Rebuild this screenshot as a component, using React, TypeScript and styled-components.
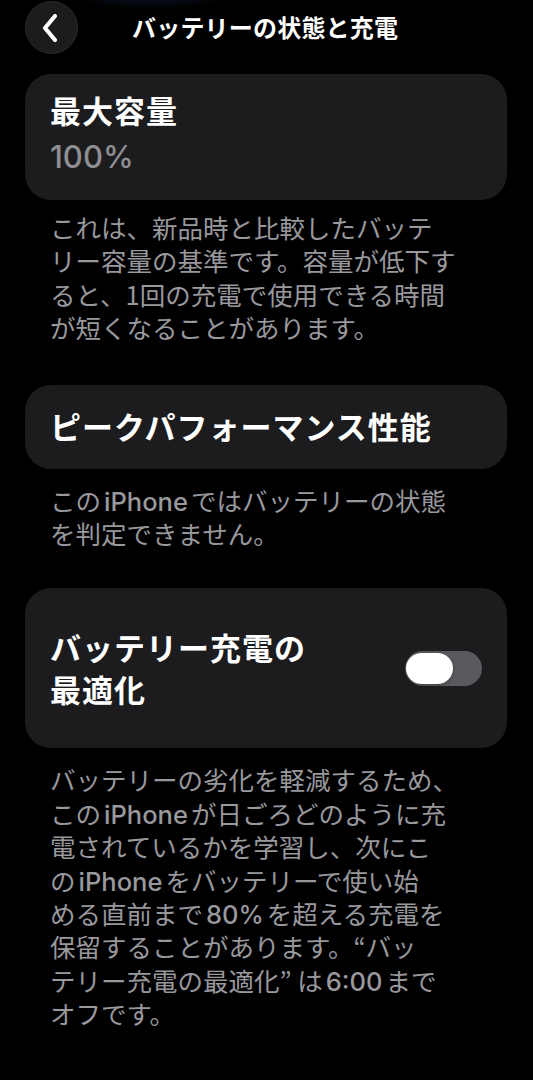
import React from "react";
import styled, { createGlobalStyle } from "styled-components";

const Global = createGlobalStyle`
  html, body { margin: 0; padding: 0; background: #000; }
  body {
    font-family: "Noto Sans CJK JP", "Noto Sans", sans-serif;
    color: #fff;
    -webkit-font-smoothing: antialiased;
  }
`;

const Page = styled.div`
  width: 533px;
  min-height: 1080px;
  background: #000;
  position: relative;
  overflow: hidden;
`;

const Glow = styled.div`
  position: absolute;
  left: 60px;
  top: -30px;
  width: 180px;
  height: 40px;
  border-radius: 50%;
  background: radial-gradient(ellipse at center, rgba(30, 60, 110, 0.45), rgba(0, 0, 0, 0) 70%);
  pointer-events: none;
`;

const Header = styled.header`
  display: flex;
  align-items: center;
  height: 55px;
  padding: 0 0 0 25px;
  gap: 54px;
  position: relative;
`;

const BackButton = styled.button`
  width: 53px;
  height: 53px;
  border-radius: 50%;
  border: 1px solid #2a2a2a;
  background: #1c1c1d;
  display: flex;
  align-items: center;
  justify-content: center;
  padding: 0 3px 0 0;
  margin: 0;
`;

const Title = styled.h1`
  margin: 0 0 2px;
  font-size: 24px;
  font-weight: 700;
  letter-spacing: 0.2px;
  color: #fff;
`;

const Content = styled.main`
  display: flex;
  flex-direction: column;
  padding: 19px 26px 0 25px;
`;

const Card = styled.section<{ $minH: number; $pt?: number }>`
  background: #1c1c1e;
  border-radius: 26px;
  min-height: ${(p) => p.$minH}px;
  box-sizing: border-box;
  padding: ${(p) => p.$pt ?? 0}px 24px 0 25px;
  display: flex;
  flex-direction: column;
`;

const CardTitle = styled.div`
  font-size: 31px;
  font-weight: 700;
  line-height: 42px;
  color: #fff;
  letter-spacing: 1px;
`;

const Value = styled.div`
  margin-top: 6px;
  font-size: 31px;
  font-weight: 500;
  line-height: 40px;
  color: #8e8e93;
  font-family: "Inter", "Noto Sans", sans-serif;
`;

const Row = styled.div`
  display: flex;
  align-items: center;
  justify-content: space-between;
  min-height: 160px;
`;

const Note = styled.p<{ $mt: number; $mb: number }>`
  margin: ${(p) => p.$mt}px 0 ${(p) => p.$mb}px 25px;
  font-size: 25.5px;
  line-height: 33.4px;
  color: #98989d;
  letter-spacing: 0;
  white-space: nowrap;
`;

const Latin = styled.span`
  font-family: "Inter", "Noto Sans", sans-serif;
  font-weight: 500;
  line-height: 1;
  margin: 0 3px;
`;

const Track = styled.div`
  width: 77px;
  height: 35px;
  border-radius: 18px;
  background: #59595e;
  display: flex;
  align-items: center;
  padding: 0 1px;
  box-sizing: border-box;
  margin-right: 1px;
`;

const Knob = styled.div`
  width: 47px;
  height: 31px;
  border-radius: 16px;
  background: #fff;
  box-shadow: 0 1px 3px rgba(0, 0, 0, 0.35);
`;

export default function App() {
  return (
    <Page>
      <Global />
      <Glow />
      <Header>
        <BackButton aria-label="戻る">
          <svg width="18" height="30" viewBox="0 0 18 30" fill="none">
            <path d="M14 3 L4 15 L14 27" stroke="#fff" strokeWidth="4.2" strokeLinecap="round" strokeLinejoin="round" />
          </svg>
        </BackButton>
        <Title>バッテリーの状態と充電</Title>
      </Header>
      <Content>
        <Card $minH={126} $pt={15}>
          <CardTitle>最大容量</CardTitle>
          <Value>100%</Value>
        </Card>
        <Note $mt={10} $mb={41}>
          これは、新品時と比較したバッテ
          <br />
          リー容量の基準です。容量が低下す
          <br />
          ると、1回の充電で使用できる時間
          <br />
          が短くなることがあります。
        </Note>
        <Card $minH={84} $pt={20}>
          <CardTitle>ピークパフォーマンス性能</CardTitle>
        </Card>
        <Note $mt={14} $mb={39}>
          この<Latin>iPhone</Latin>ではバッテリーの状態
          <br />
          を判定できません。
        </Note>
        <Card $minH={160}>
          <Row>
            <CardTitle>
              バッテリー充電の
              <br />
              最適化
            </CardTitle>
            <Track>
              <Knob />
            </Track>
          </Row>
        </Card>
        <Note $mt={14} $mb={0}>
          バッテリーの劣化を軽減するため、
          <br />
          この<Latin>iPhone</Latin>が日ごろどのように充
          <br />
          電されているかを学習し、次にこ
          <br />
          の<Latin>iPhone</Latin>をバッテリーで使い始
          <br />
          める直前まで<Latin>80%</Latin>を超える充電を
          <br />
          保留することがあります。“バッ
          <br />
          テリー充電の最適化” は<Latin>6:00</Latin>まで
          <br />
          オフです。
        </Note>
      </Content>
    </Page>
  );
}
